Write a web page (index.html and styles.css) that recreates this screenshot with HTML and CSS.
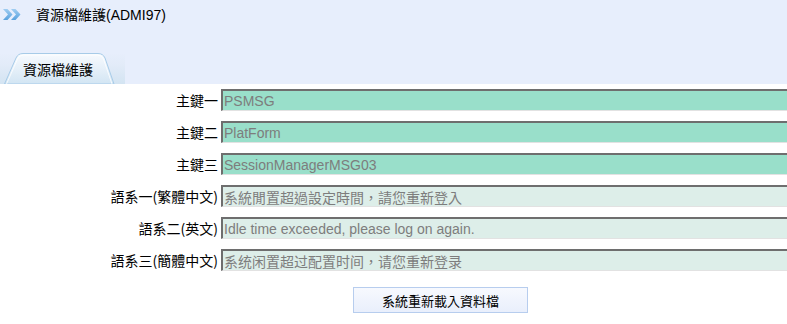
FILE: index.html
```html
<!DOCTYPE html>
<html lang="zh-Hant">
<head>
<meta charset="utf-8">
<title>資源檔維護(ADMI97)</title>
<link rel="stylesheet" href="styles.css">
</head>
<body>
<div class="page">
  <header class="hdr">
    <div class="title-row">
      <svg class="chev" width="20" height="13" viewBox="0 0 20 13" aria-hidden="true">
        <defs>
          <linearGradient id="cg" x1="0" y1="0" x2="0" y2="1">
            <stop offset="0" stop-color="#9fcdf2"/>
            <stop offset="1" stop-color="#5aa2de"/>
          </linearGradient>
        </defs>
        <path d="M1 1 L5.5 1 L10.5 6.5 L5.5 12 L1 12 L6 6.5 Z" fill="url(#cg)"/>
        <path d="M9 1 L13.5 1 L18.5 6.5 L13.5 12 L9 12 L14 6.5 Z" fill="url(#cg)"/>
      </svg>
      <span class="title">資源檔維護(ADMI97)</span>
    </div>
    <div class="tabs">
      <div class="tab">
        <svg class="tab-bg" width="125" height="31" viewBox="0 0 125 31" aria-hidden="true">
          <defs>
            <linearGradient id="sg" x1="0" y1="0" x2="0" y2="1">
              <stop offset="0" stop-color="#e7eefc"/>
              <stop offset="0.4" stop-color="#e2ebf8"/>
              <stop offset="1" stop-color="#d3e4f2"/>
            </linearGradient>
            <linearGradient id="tg" x1="0" y1="0" x2="0" y2="1">
              <stop offset="0" stop-color="#f7fafe"/>
              <stop offset="0.5" stop-color="#e6f0f9"/>
              <stop offset="1" stop-color="#d2e5f3"/>
            </linearGradient>
          </defs>
          <rect x="0" y="0" width="125" height="31" fill="url(#sg)"/>
          <path d="M4.5 31 L16 5 Q18 0.5 23 0.5 L98 0.5 Q103 0.5 105 5 L114 31 Z" fill="url(#tg)" stroke="#a7cbe8" stroke-width="1"/>
          <path d="M6.5 31 L17.5 6 Q19.5 2 23.5 2 L97.5 2 Q101.5 2 103.5 6 L112 31" fill="none" stroke="#ffffff" stroke-width="1" opacity="0.8"/>
        </svg>
        <span class="tab-label">資源檔維護</span>
      </div>
    </div>
  </header>

  <form class="form">
    <label class="lbl" for="k1">主鍵一</label>
    <input class="fld key" id="k1" type="text" value="PSMSG" readonly>

    <label class="lbl" for="k2">主鍵二</label>
    <input class="fld key" id="k2" type="text" value="PlatForm" readonly>

    <label class="lbl" for="k3">主鍵三</label>
    <input class="fld key" id="k3" type="text" value="SessionManagerMSG03" readonly>

    <label class="lbl" for="l1">語系一(繁體中文)</label>
    <input class="fld lang" id="l1" type="text" value="系統閒置超過設定時間，請您重新登入" readonly>

    <label class="lbl" for="l2">語系二(英文)</label>
    <input class="fld lang" id="l2" type="text" value="Idle time exceeded, please log on again." readonly>

    <label class="lbl" for="l3">語系三(簡體中文)</label>
    <input class="fld lang" id="l3" type="text" value="系统闲置超过配置时间，请您重新登录" readonly>

    <div class="actions">
      <button class="btn" type="button">系統重新載入資料檔</button>
    </div>
  </form>
</div>
</body>
</html>
```

FILE: styles.css
```css
html, body {
  margin: 0;
  padding: 0;
  background: #ffffff;
  overflow: hidden;
}

.page {
  width: 787px;
  height: 324px;
  overflow: hidden;
  font-family: "Liberation Sans", Arial, "Noto Sans CJK TC", sans-serif;
  color: #000;
}

.hdr {
  background: #e7eefc;
  height: 84px;
  display: flex;
  flex-direction: column;
}

.title-row {
  height: 30px;
  display: flex;
  align-items: center;
  padding-left: 2px;
}

.chev {
  display: block;
  margin-top: -1px;
}

.title {
  margin-left: 14px;
  font-size: 14px;
  line-height: 16px;
  font-family: "Liberation Sans", Arial, "Noto Sans CJK TC", sans-serif;
}

.tabs {
  margin-top: auto;
  display: flex;
}

.tab {
  position: relative;
  width: 125px;
  height: 31px;
  display: flex;
  align-items: center;
}

.tab-bg {
  position: absolute;
  left: 0;
  top: 0;
  display: block;
}

.tab-label {
  position: relative;
  margin-left: 23px;
  margin-top: 1px;
  font-size: 14px;
  line-height: 16px;
  font-family: "Noto Sans CJK TC", sans-serif;
}

.form {
  display: grid;
  grid-template-columns: 218px 620px;
  column-gap: 3px;
  row-gap: 10px;
  padding-top: 5px;
  align-items: center;
}

.lbl {
  text-align: right;
  font-size: 14px;
  line-height: 16px;
  font-family: "Noto Sans CJK TC", sans-serif;
  white-space: nowrap;
}

.fld {
  box-sizing: border-box;
  height: 22px;
  margin: 0;
  padding: 0 0 0 1px;
  border-top: 2px solid #6e6e6e;
  border-left: 2px solid #6e6e6e;
  border-bottom: 1px solid #e2e2e2;
  border-right: 1px solid #e2e2e2;
  font-family: "Liberation Sans", Arial, "Noto Sans CJK TC", sans-serif;
  font-size: 14px;
  color: #7d7d7d;
  outline: none;
  width: 100%;
}

.key {
  background: #99dfca;
}

.lang {
  background: #ddeee9;
}

.actions {
  grid-column: 1 / -1;
  padding-left: 353px;
  padding-top: 6px;
}

.btn {
  box-sizing: border-box;
  width: 175px;
  height: 26px;
  margin: 0;
  padding: 0;
  border: 1px solid #b7cdee;
  background: linear-gradient(#f7f9fe, #e9effc);
  font-family: "Noto Sans CJK TC", sans-serif;
  font-size: 13px;
  color: #000;
}
```
